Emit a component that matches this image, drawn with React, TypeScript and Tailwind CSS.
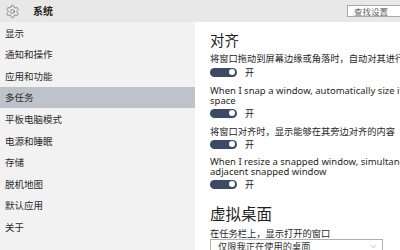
import { Settings, ChevronDown } from 'lucide-react';

const NAV_ITEMS = [
  '显示',
  '通知和操作',
  '应用和功能',
  '多任务',
  '平板电脑模式',
  '电源和睡眠',
  '存储',
  '脱机地图',
  '默认应用',
  '关于',
];

// CJK face first so mixed fallback doesn't stretch line boxes
const CJK = "font-['Noto_Sans_CJK_SC','Noto_Sans',sans-serif]";
const LATIN = "font-['Noto_Sans','Noto_Sans_CJK_SC',sans-serif]";

function Toggle() {
  return (
    <div className="flex items-center gap-[8px] h-[10px]">
      <div className="w-[27px] h-[9px] rounded-full bg-[#3c4a66] flex items-center justify-end pr-[2px]">
        <div className="w-[6px] h-[6px] rounded-full bg-white" />
      </div>
      <span className="text-[9px] leading-none text-[#222]">开</span>
    </div>
  );
}

export default function App() {
  return (
    <div className={`w-[400px] h-[250px] overflow-hidden flex flex-col bg-white ${CJK}`}>
      {/* Title bar */}
      <header className="h-[22px] bg-[#e8e8e8] flex items-center flex-shrink-0">
        <Settings size={15} strokeWidth={1} className="ml-[5px] text-[#555]" />
        <span className="ml-[13px] text-[10px] font-semibold text-[#222] leading-none">系统</span>
        <div className="flex-1" />
        <div className="w-[60px] h-[12px] bg-white border border-[#a8a8a8] flex items-center pl-[6px] mr-[-7px]">
          <span className="text-[8.5px] leading-none text-[#666]">查找设置</span>
        </div>
      </header>

      <div className="flex flex-1 min-h-0">
        {/* Sidebar */}
        <nav className="w-[195px] bg-[#f2f2f2] flex flex-col flex-shrink-0">
          {NAV_ITEMS.map((item) => (
            <div
              key={item}
              className={`h-[21.6px] flex items-center pl-[5px] text-[9.5px] text-[#2a2a2a] ${
                item === '多任务' ? 'bg-[#bec2ca]' : ''
              }`}
            >
              {item}
            </div>
          ))}
        </nav>

        {/* Content */}
        <main className="flex-1 min-w-0 pl-[15px] whitespace-nowrap text-[#1f1f1f]">
          <h2 className="mt-[11px] text-[14.5px] leading-[14px]">对齐</h2>
          <p className="mt-[6px] text-[9.25px] leading-[10px]">将窗口拖动到屏幕边缘或角落时，自动对其进行调整</p>
          <div className="mt-[4px]">
            <Toggle />
          </div>
          <p className={`mt-[9px] text-[9.5px] leading-[10px] ${LATIN}`}>
            When I snap a window, automatically size it to fill available
            <br />
            space
          </p>
          <div className="mt-[2px]">
            <Toggle />
          </div>
          <p className="mt-[8px] text-[9.25px] leading-[10px]">将窗口对齐时，显示能够在其旁边对齐的内容</p>
          <div className="mt-[3px]">
            <Toggle />
          </div>
          <p className={`mt-[7.5px] text-[9.5px] leading-[10px] ${LATIN}`}>
            When I resize a snapped window, simultaneously resize any
            <br />
            adjacent snapped window
          </p>
          <div className="mt-[2.5px]">
            <Toggle />
          </div>
          <h2 className="mt-[17px] text-[15.5px] leading-[15px]">虚拟桌面</h2>
          <p className="mt-[6.5px] text-[9.25px] leading-[10px]">在任务栏上，显示打开的窗口</p>
          <div className="mt-[1px] w-[173px] h-[20px] border border-[#b0b0b0] flex items-start pt-[1px] pl-[7px] pr-[4px]">
            <span className="text-[9.25px] leading-[10px] text-[#333]">仅限我正在使用的桌面</span>
            <div className="flex-1" />
            <ChevronDown size={9} strokeWidth={1.2} className="text-[#777] mt-[1px]" />
          </div>
        </main>
      </div>
    </div>
  );
}
